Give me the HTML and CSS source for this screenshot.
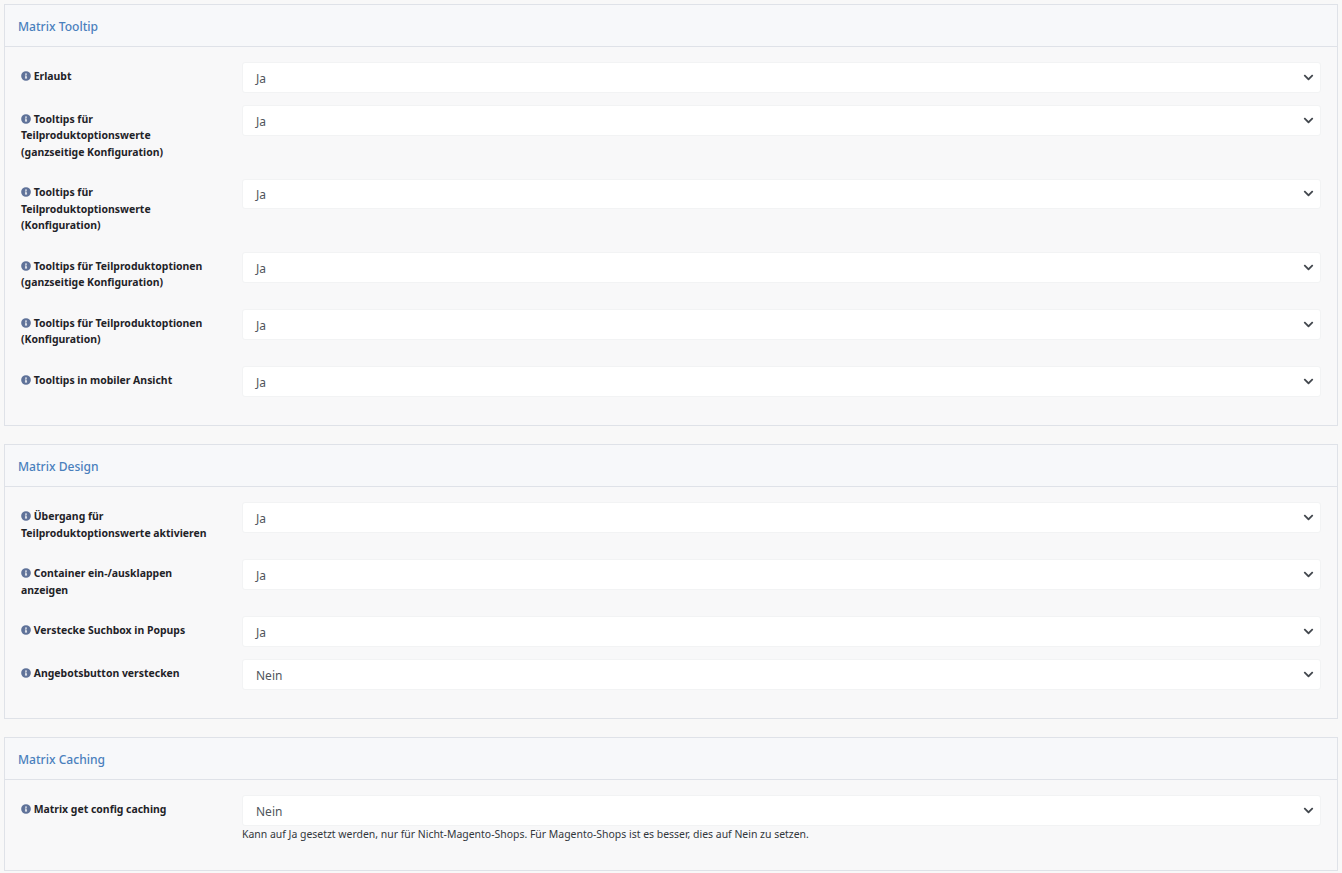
FILE: index.html
```html
<!DOCTYPE html>
<html lang="de">
<head>
<meta charset="utf-8">
<title>Matrix</title>
<link rel="stylesheet" href="styles.css">
</head>
<body>
<svg class="defs" width="0" height="0" aria-hidden="true"><defs>
<symbol id="info" viewBox="0 0 512 512"><path d="M256 8a248 248 0 1 0 0 496 248 248 0 0 0 0-496zm0 110a42 42 0 1 1 0 84 42 42 0 0 1 0-84zm56 254c0 7-5 12-12 12h-88c-7 0-12-5-12-12v-24c0-7 5-12 12-12h12v-64h-12c-7 0-12-5-12-12v-24c0-7 5-12 12-12h64c7 0 12 5 12 12v100h12c7 0 12 5 12 12z"/></symbol>
<symbol id="chev" viewBox="0 0 448 512"><path d="M207 381 13 187c-9-9-9-24 0-34l23-23c9-9 24-9 34 0l154 154 154-154c9-9 24-9 34 0l23 23c9 9 9 24 0 34L241 381c-9 9-25 9-34 0z"/></symbol>
</defs></svg>

<section class="card">
  <h2 class="card-head">Matrix Tooltip</h2>
  <div class="card-body">
    <div class="row">
      <label class="label"><svg class="info"><use href="#info"/></svg> Erlaubt</label>
      <div class="field"><div class="select"><span class="value">Ja</span><svg class="chev"><use href="#chev"/></svg></div></div>
    </div>
    <div class="row">
      <label class="label"><svg class="info"><use href="#info"/></svg> Tooltips für Teilproduktoptionswerte (ganzseitige Konfiguration)</label>
      <div class="field"><div class="select"><span class="value">Ja</span><svg class="chev"><use href="#chev"/></svg></div></div>
    </div>
    <div class="row">
      <label class="label"><svg class="info"><use href="#info"/></svg> Tooltips für Teilproduktoptionswerte (Konfiguration)</label>
      <div class="field"><div class="select"><span class="value">Ja</span><svg class="chev"><use href="#chev"/></svg></div></div>
    </div>
    <div class="row">
      <label class="label"><svg class="info"><use href="#info"/></svg> Tooltips für Teilproduktoptionen (ganzseitige Konfiguration)</label>
      <div class="field"><div class="select"><span class="value">Ja</span><svg class="chev"><use href="#chev"/></svg></div></div>
    </div>
    <div class="row">
      <label class="label"><svg class="info"><use href="#info"/></svg> Tooltips für Teilproduktoptionen (Konfiguration)</label>
      <div class="field"><div class="select"><span class="value">Ja</span><svg class="chev"><use href="#chev"/></svg></div></div>
    </div>
    <div class="row">
      <label class="label"><svg class="info"><use href="#info"/></svg> Tooltips in mobiler Ansicht</label>
      <div class="field"><div class="select"><span class="value">Ja</span><svg class="chev"><use href="#chev"/></svg></div></div>
    </div>
  </div>
</section>

<section class="card">
  <h2 class="card-head">Matrix Design</h2>
  <div class="card-body">
    <div class="row">
      <label class="label"><svg class="info"><use href="#info"/></svg> Übergang für Teilproduktoptionswerte aktivieren</label>
      <div class="field"><div class="select"><span class="value">Ja</span><svg class="chev"><use href="#chev"/></svg></div></div>
    </div>
    <div class="row">
      <label class="label"><svg class="info"><use href="#info"/></svg> Container ein-/ausklappen anzeigen</label>
      <div class="field"><div class="select"><span class="value">Ja</span><svg class="chev"><use href="#chev"/></svg></div></div>
    </div>
    <div class="row">
      <label class="label"><svg class="info"><use href="#info"/></svg> Verstecke Suchbox in Popups</label>
      <div class="field"><div class="select"><span class="value">Ja</span><svg class="chev"><use href="#chev"/></svg></div></div>
    </div>
    <div class="row">
      <label class="label"><svg class="info"><use href="#info"/></svg> Angebotsbutton verstecken</label>
      <div class="field"><div class="select"><span class="value">Nein</span><svg class="chev"><use href="#chev"/></svg></div></div>
    </div>
  </div>
</section>

<section class="card">
  <h2 class="card-head">Matrix Caching</h2>
  <div class="card-body">
    <div class="row">
      <label class="label"><svg class="info"><use href="#info"/></svg> Matrix get config caching</label>
      <div class="field">
        <div class="select"><span class="value">Nein</span><svg class="chev"><use href="#chev"/></svg></div>
        <p class="hint">Kann auf Ja gesetzt werden, nur für Nicht-Magento-Shops. Für Magento-Shops ist es besser, dies auf Nein zu setzen.</p>
      </div>
    </div>
  </div>
</section>
</body>
</html>
```
FILE: styles.css
```css
* { box-sizing: border-box; }
html, body { height: 100%; }
body {
  margin: 0;
  padding: 4px 4px 0;
  background: #f8f8f8;
  color: #212529;
  font-family: "Noto Sans", "Open Sans", sans-serif;
  font-size: 11px;
  overflow: hidden;
}
.defs { position: absolute; }
.card {
  border: 1px solid #dfe2e8;
  margin-bottom: 18px;
  background: #f8f8f9;
}
.card-head {
  margin: 0;
  height: 42px;
  padding: 1px 13px 0;
  display: flex;
  align-items: center;
  background: #f7f8fa;
  border-bottom: 1px solid #dfe2e8;
  color: #4a80bd;
  font-size: 12.08px;
  font-weight: 500;
}
.card-body { padding: 15px 16px 16px; }
.row {
  display: grid;
  grid-template-columns: 221px 1fr;
}
.card:nth-of-type(2) .label { padding-top: 6px; padding-bottom: 18px; }
.label {
  display: block;
  padding: 5.75px 30px 18.25px 0;
  color: #1f2328;
  font-size: 10.45px;
  font-weight: 700;
  line-height: 16.5px;
}
.info {
  width: 10px;
  height: 10px;
  fill: #5f7299;
  vertical-align: -1px;
}
.field { padding-bottom: 12.5px; }
.select {
  height: 30.5px;
  padding: 0 6px 0 13px;
  display: flex;
  align-items: center;
  justify-content: space-between;
  background: #fff;
  border: 1px solid #f2f3f4;
  border-radius: 3px;
  color: #4f555b;
  font-size: 12px;
}
.value { padding-top: 2px; }
.chev {
  width: 11px;
  height: 11px;
  fill: #43484e;
}
.hint {
  margin: 1px 0 1px;
  color: #32373c;
  font-size: 10.45px;
  line-height: 14px;
}
```
